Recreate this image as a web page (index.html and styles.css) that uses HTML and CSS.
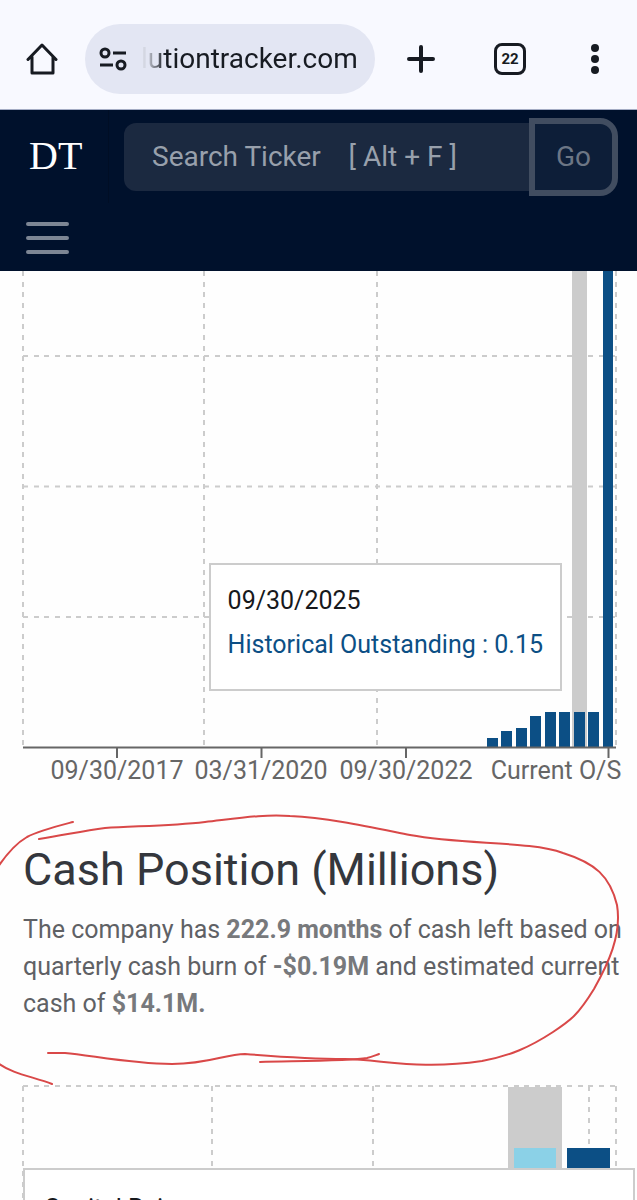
FILE: index.html
```
<!DOCTYPE html>
<html lang="en">

    <head>
        <meta charset="utf-8">
        <meta name="viewport" content="width=device-width, initial-scale=1">
        <title>Dilution Tracker</title>

        <link rel="stylesheet" href="styles.css">
    </head>

    <body>

        <!-- browser bar -->
        <div class="browser">
            <button class="icon-btn home" aria-label="Home">
                <svg width="32" height="34" viewBox="0 0 32 34" fill="none" stroke="#171b22" stroke-width="3" stroke-linecap="round" stroke-linejoin="round">
                    <path d="M2 17.500 16 3l14 14.500M6 15v16h21V15" />
                </svg>
            </button>
            <div class="url">
                <svg width="28" height="24" viewBox="0 0 28 24" fill="none" stroke="#171b22" stroke-width="3">
                    <circle cx="6" cy="6" r="4" />
                    <path d="M14 6h13M1 18h13" />
                    <circle cx="22" cy="18" r="4" />
                </svg>
                <input class="url-text" type="text" aria-label="Address" value="lutiontracker.com" readonly>
            </div>
            <button class="icon-btn plus" aria-label="New tab">
                <svg width="28" height="28" viewBox="0 0 28 28" stroke="#171b22" stroke-width="4" stroke-linecap="round">
                    <path d="M14 2v24M2 14h24" />
                </svg>
            </button>
            <button class="tabs" aria-label="Open tabs">22</button>
            <button class="icon-btn more" aria-label="More">
                <svg width="8" height="30" viewBox="0 0 8 30" fill="#171b22">
                    <circle cx="4" cy="4" r="4" />
                    <circle cx="4" cy="15" r="4" />
                    <circle cx="4" cy="26" r="4" />
                </svg>
            </button>
        </div>

        <header class="navbar">
            <div class="nav-row">
                <a class="brand" href="#">DT</a>
                <form class="search">
                    <input class="search-input" type="text" aria-label="Search ticker" placeholder="Search Ticker &nbsp;&nbsp; [ Alt + F ]">
                    <button class="search-go" type="button">Go</button>
                </form>
            </div>
            <button class="menu" aria-label="Menu">
                <svg width="44" height="34" viewBox="0 0 44 34" stroke="#7d8694" stroke-width="4" stroke-linecap="round">
                    <path d="M2 3h39M2 17h39M2 31h39" />
                </svg>
            </button>
        </header>

        <main>

            <section class="chart">
                <svg class="chart-svg" viewBox="0 0 637 519" role="img" aria-label="Historical outstanding shares">
                    <g class="grid">
                        <path d="M23 85H616M23 215.500H616M23 346H616" />
                        <path d="M23 0V476M204 0V476M377 0V476M616 0V476" />
                    </g>
                    <rect class="cursor" x="572" y="0" width="15" height="476" />
                    <g class="bar">
                        <rect x="487" y="467" width="11" height="9" />
                        <rect x="501" y="460" width="11" height="16" />
                        <rect x="516" y="457" width="11" height="19" />
                        <rect x="530" y="445" width="11" height="31" />
                        <rect x="545" y="441" width="11" height="35" />
                        <rect x="559" y="441" width="11" height="35" />
                        <rect x="574" y="441" width="11" height="35" />
                        <rect x="588" y="441" width="11" height="35" />
                        <rect x="603" y="0" width="10" height="476" />
                    </g>
                    <path class="axis" d="M23 476.500H616M117 476v11M261.500 476v11M406 476v11M608.500 476v11" />
                    <g class="ticks">
                        <text x="117" y="508">09/30/2017</text>
                        <text x="261" y="508">03/31/2020</text>
                        <text x="406" y="508">09/30/2022</text>
                        <text x="556" y="508">Current O/S</text>
                    </g>
                </svg>
                <div class="tooltip">
                    <p class="tooltip-label">09/30/2025</p>
                    <p class="tooltip-item">Historical Outstanding : 0.15</p>
                </div>
            </section>

            <section class="cash">
                <h2>Cash Position (Millions)</h2>
                <p>The company has <b>222.9 months</b> of cash left based on quarterly cash burn of <b>-$0.19M</b> and estimated current cash of <b>$14.1M.</b></p>

                <!-- red pen marks around the text -->
                <svg class="pen" viewBox="0 0 637 290" aria-hidden="true">
                    <path d="M73 32C54 37 38 41 27 47C15 54 6 65-2 77" />
                    <path d="M39 49C65 45 82 41 105 38C135 36 170 36 205 32C240 28 265 24 290 26C330 28 370 37 410 45C465 55 530 51 563 63C595 73 610 86 617 115C622 145 608 174 594 199C578 225 571 230 553 242C530 257 510 266 482 271C420 280 385 270 345 269C310 269 270 266 245 264C225 264 210 274 172 274C130 274 90 265 65 263C58 263 53 263 48 263" />
                    <path d="M260 272C295 271 350 271 367 268C372 267 376 265 379 264" />
                    <path d="M-2 273C12 284 35 287 52 294" />
                </svg>
            </section>

            <section class="chart chart-cash">
                <svg class="chart-svg" viewBox="0 0 637 118" role="img" aria-label="Cash position">
                    <g class="grid">
                        <path d="M23 4H616M23 4V118M212 4V118M373 4V118M589 4V118M616 4V118" />
                    </g>
                    <rect class="cursor" x="508" y="5" width="54" height="113" />
                    <rect class="bar-light" x="514" y="66" width="42" height="52" />
                    <rect class="bar" x="567" y="66" width="43" height="52" />
                </svg>
                <div class="tooltip tooltip-cash">
                    <p class="tooltip-label">Capital Raise</p>
                </div>
            </section>

        </main>

    </body>

</html>
```
FILE: styles.css
```
* {
    box-sizing: border-box;
}

html {
    height: 100%;
    overflow: hidden;
}

body {
    margin: 0;
    height: 100%;
    overflow: hidden;
    background: #fefefe;
    color: #5f6165;
    font-family: Roboto, "Liberation Sans", sans-serif;
    font-size: 25px;
}

button, input {
    margin: 0;
    padding: 0;
    border: 0;
    background: none;
    font-family: inherit;
}

svg {
    display: block;
}

p, h2 {
    margin: 0;
}

.browser {
    display: flex;
    align-items: center;
    height: 110px;
    padding: 8px 38px 0 26px;
    background: #f8f9ff;
    border-bottom: 1px solid #a4acc4;
}

.url {
    display: flex;
    align-items: center;
    flex: 1;
    min-width: 0;
    height: 70px;
    margin: 0 32px 0 27px;
    padding: 0 8px 0 14px;
    border-radius: 35px;
    background: #e3e6f3;
}

.url-text {
    flex: 1;
    min-width: 0;
    margin-left: 14px;
    color: transparent;
    background: linear-gradient(90deg, #d4d7e2 5px, #a4a7b1 10px, #171b22 24px);
    background-clip: text;
    font-size: 28px;
}

.tabs {
    width: 32px;
    height: 32px;
    margin: 0 65px 0 59px;
    border: 3px solid #171b22;
    border-radius: 8px;
    color: #171b22;
    font-size: 15px;
    font-weight: 700;
}

.navbar {
    height: 161px;
    background: #00112c;
}

.nav-row {
    display: flex;
    height: 93px;
}

.brand {
    width: 109px;
    padding-left: 29px;
    border-right: 1px solid #000e25;
    color: #fff;
    font-family: "Liberation Serif", serif;
    font-size: 40px;
    line-height: 92px;
    text-decoration: none;
}

.search {
    display: flex;
    flex: 1;
    align-items: center;
    padding: 0 19px 0 15px;
}

.search-input {
    flex: 1;
    min-width: 0;
    height: 68px;
    padding-left: 28px;
    border-radius: 12px 0 0 12px;
    background: #1b2940;
    color: #98a0ac;
    font-size: 28px;
}

.search-input::placeholder {
    color: #98a0ac;
}

.search-go {
    width: 89px;
    height: 78px;
    border: 6px solid #414d60;
    border-radius: 0 18px 18px 0;
    background: #0d1e38;
    color: #6c7685;
    font-size: 28px;
}

.menu {
    margin: 18px 0 0 26px;
}

.chart {
    position: relative;
}

.chart-svg {
    width: 100%;
    height: auto;
}

.grid {
    fill: none;
    stroke: #ccc;
    stroke-width: 2;
    stroke-dasharray: 5 6 5 5 5 6;
}

.cursor {
    fill: #ccc;
}

.bar {
    fill: #0c4f85;
}

.bar-light {
    fill: #8bd1e7;
}

.axis {
    fill: none;
    stroke: #666;
    stroke-width: 2;
}

.ticks {
    fill: #666;
    font-size: 25px;
    text-anchor: middle;
}

.tooltip {
    position: absolute;
    top: 292px;
    right: 75px;
    padding: 17px;
    height: 128px;
    border: 2px solid #ccc;
    background: #fff;
    line-height: 38px;
    white-space: nowrap;
}

.tooltip-label {
    color: #17191c;
}

.tooltip-item {
    margin-top: 6px;
    color: #0c4f85;
}

.cash {
    position: relative;
    padding: 48px 12px 60px 23px;
}

.cash h2 {
    color: #34373d;
    font-size: 45px;
    font-weight: 400;
    line-height: 64px;
}

.cash p {
    margin-top: 9px;
    line-height: 37px;
}

.cash b {
    color: #77797c;
}

.pen {
    position: absolute;
    top: 0;
    left: 0;
    z-index: 1;
    width: 100%;
    overflow: visible;
    fill: none;
    stroke: #d94848;
    stroke-width: 2;
    stroke-linecap: round;
}

.tooltip-cash {
    top: 86px;
    right: 2px;
    left: 23px;
    padding: 20px 19px;
}
```
